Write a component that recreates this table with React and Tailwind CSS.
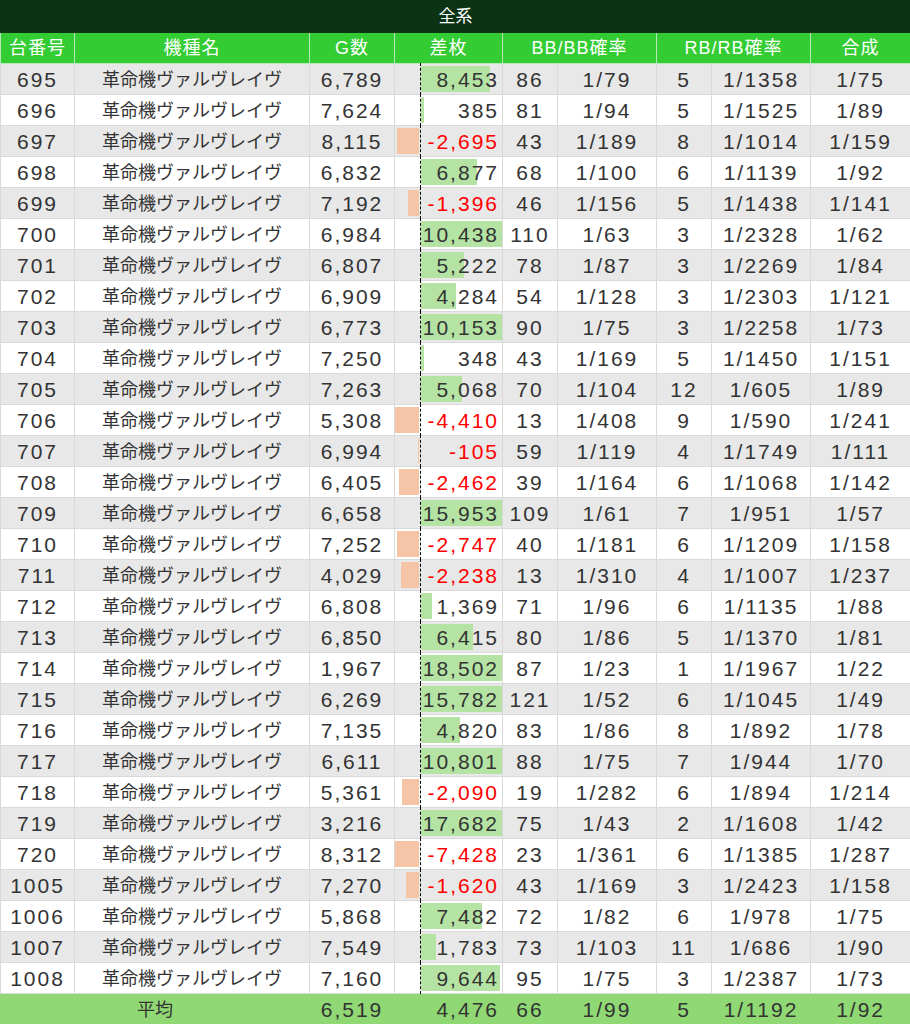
import React from "react";

const rows = [
  ["695", "6,789", 8453, "86", "1/79", "5", "1/1358", "1/75"],
  ["696", "7,624", 385, "81", "1/94", "5", "1/1525", "1/89"],
  ["697", "8,115", -2695, "43", "1/189", "8", "1/1014", "1/159"],
  ["698", "6,832", 6877, "68", "1/100", "6", "1/1139", "1/92"],
  ["699", "7,192", -1396, "46", "1/156", "5", "1/1438", "1/141"],
  ["700", "6,984", 10438, "110", "1/63", "3", "1/2328", "1/62"],
  ["701", "6,807", 5222, "78", "1/87", "3", "1/2269", "1/84"],
  ["702", "6,909", 4284, "54", "1/128", "3", "1/2303", "1/121"],
  ["703", "6,773", 10153, "90", "1/75", "3", "1/2258", "1/73"],
  ["704", "7,250", 348, "43", "1/169", "5", "1/1450", "1/151"],
  ["705", "7,263", 5068, "70", "1/104", "12", "1/605", "1/89"],
  ["706", "5,308", -4410, "13", "1/408", "9", "1/590", "1/241"],
  ["707", "6,994", -105, "59", "1/119", "4", "1/1749", "1/111"],
  ["708", "6,405", -2462, "39", "1/164", "6", "1/1068", "1/142"],
  ["709", "6,658", 15953, "109", "1/61", "7", "1/951", "1/57"],
  ["710", "7,252", -2747, "40", "1/181", "6", "1/1209", "1/158"],
  ["711", "4,029", -2238, "13", "1/310", "4", "1/1007", "1/237"],
  ["712", "6,808", 1369, "71", "1/96", "6", "1/1135", "1/88"],
  ["713", "6,850", 6415, "80", "1/86", "5", "1/1370", "1/81"],
  ["714", "1,967", 18502, "87", "1/23", "1", "1/1967", "1/22"],
  ["715", "6,269", 15782, "121", "1/52", "6", "1/1045", "1/49"],
  ["716", "7,135", 4820, "83", "1/86", "8", "1/892", "1/78"],
  ["717", "6,611", 10801, "88", "1/75", "7", "1/944", "1/70"],
  ["718", "5,361", -2090, "19", "1/282", "6", "1/894", "1/214"],
  ["719", "3,216", 17682, "75", "1/43", "2", "1/1608", "1/42"],
  ["720", "8,312", -7428, "23", "1/361", "6", "1/1385", "1/287"],
  ["1005", "7,270", -1620, "43", "1/169", "3", "1/2423", "1/158"],
  ["1006", "5,868", 7482, "72", "1/82", "6", "1/978", "1/75"],
  ["1007", "7,549", 1783, "73", "1/103", "11", "1/686", "1/90"],
  ["1008", "7,160", 9644, "95", "1/75", "3", "1/2387", "1/73"],
];

const fmt = (n) => (n < 0 ? "-" : "") + Math.abs(n).toLocaleString("en-US");

const td = "h-[30px] p-0 pt-[2px] leading-[28px] border border-[#d9d9d9] text-center tracking-[2px]";
const th = "h-[30px] p-0 leading-[30px] border border-[#b8e8b8] bg-[#33cc33] text-white font-normal text-[18px] tracking-[1px]";
const ft = "h-[30px] p-0 pt-[2px] leading-[28px] border border-[#8fd874] text-center tracking-[2px]";

// data bar in the 差枚 column, axis sits 25px from the cell's left edge
function DiffCell({ v }) {
  const w = Math.abs(v) * 0.00816;
  return (
    <td className="relative h-[30px] p-0 pt-[2px] pr-[3px] leading-[28px] border border-[#d9d9d9] text-right tracking-[2px]">
      {v > 0 ? (
        <div
          className="absolute top-[2px] bottom-[2px] left-[26px] bg-[#b4e3a4]"
          style={{ width: Math.min(81, w) }}
        />
      ) : (
        <div
          className="absolute top-[2px] bottom-[2px] right-[83px] bg-[#f6c5a8]"
          style={{ width: Math.min(24, w) }}
        />
      )}
      <div className="absolute -top-px -bottom-px left-[25px] border-l border-dashed border-black" />
      <span className={"relative " + (v < 0 ? "text-[#ff0000]" : "")}>{fmt(v)}</span>
    </td>
  );
}

export default function App() {
  return (
    <div className="w-[910px] bg-white text-[#333] text-[21px] font-[family-name:Liberation_Sans,Noto_Sans_CJK_JP,sans-serif]">
      <table className="w-[910px] table-fixed border-collapse">
        <colgroup>
          <col className="w-[74px]" />
          <col className="w-[235px]" />
          <col className="w-[85px]" />
          <col className="w-[108px]" />
          <col className="w-[55px]" />
          <col className="w-[99px]" />
          <col className="w-[55px]" />
          <col className="w-[99px]" />
          <col className="w-[100px]" />
        </colgroup>
        <thead>
          <tr>
            <th colSpan={9} className="h-[31px] p-0 leading-[31px] border border-[#0b3314] bg-[#0b3314] text-white font-normal text-[17px]">
              全系
            </th>
          </tr>
          <tr>
            <th className={th}>台番号</th>
            <th className={th}>機種名</th>
            <th className={th}>G数</th>
            <th className={th}>差枚</th>
            <th colSpan={2} className={th}>BB/BB確率</th>
            <th colSpan={2} className={th}>RB/RB確率</th>
            <th className={th}>合成</th>
          </tr>
        </thead>
        <tbody>
          {rows.map((r, i) => (
            <tr key={r[0]} className={i % 2 === 0 ? "bg-[#e8e8e8]" : "bg-white"}>
              <td className={td}>{r[0]}</td>
              <td className={td + " text-[18px] tracking-normal"}>革命機ヴァルヴレイヴ</td>
              <td className={td}>{r[1]}</td>
              <DiffCell v={r[2]} />
              <td className={td}>{r[3]}</td>
              <td className={td}>{r[4]}</td>
              <td className={td}>{r[5]}</td>
              <td className={td}>{r[6]}</td>
              <td className={td}>{r[7]}</td>
            </tr>
          ))}
          <tr className="bg-[#8fd874]">
            <td colSpan={2} className={ft + " text-[18px] tracking-normal"}>平均</td>
            <td className={ft}>6,519</td>
            <td className={ft + " text-right pr-[3px]"}>4,476</td>
            <td className={ft}>66</td>
            <td className={ft}>1/99</td>
            <td className={ft}>5</td>
            <td className={ft}>1/1192</td>
            <td className={ft}>1/92</td>
          </tr>
        </tbody>
      </table>
    </div>
  );
}
